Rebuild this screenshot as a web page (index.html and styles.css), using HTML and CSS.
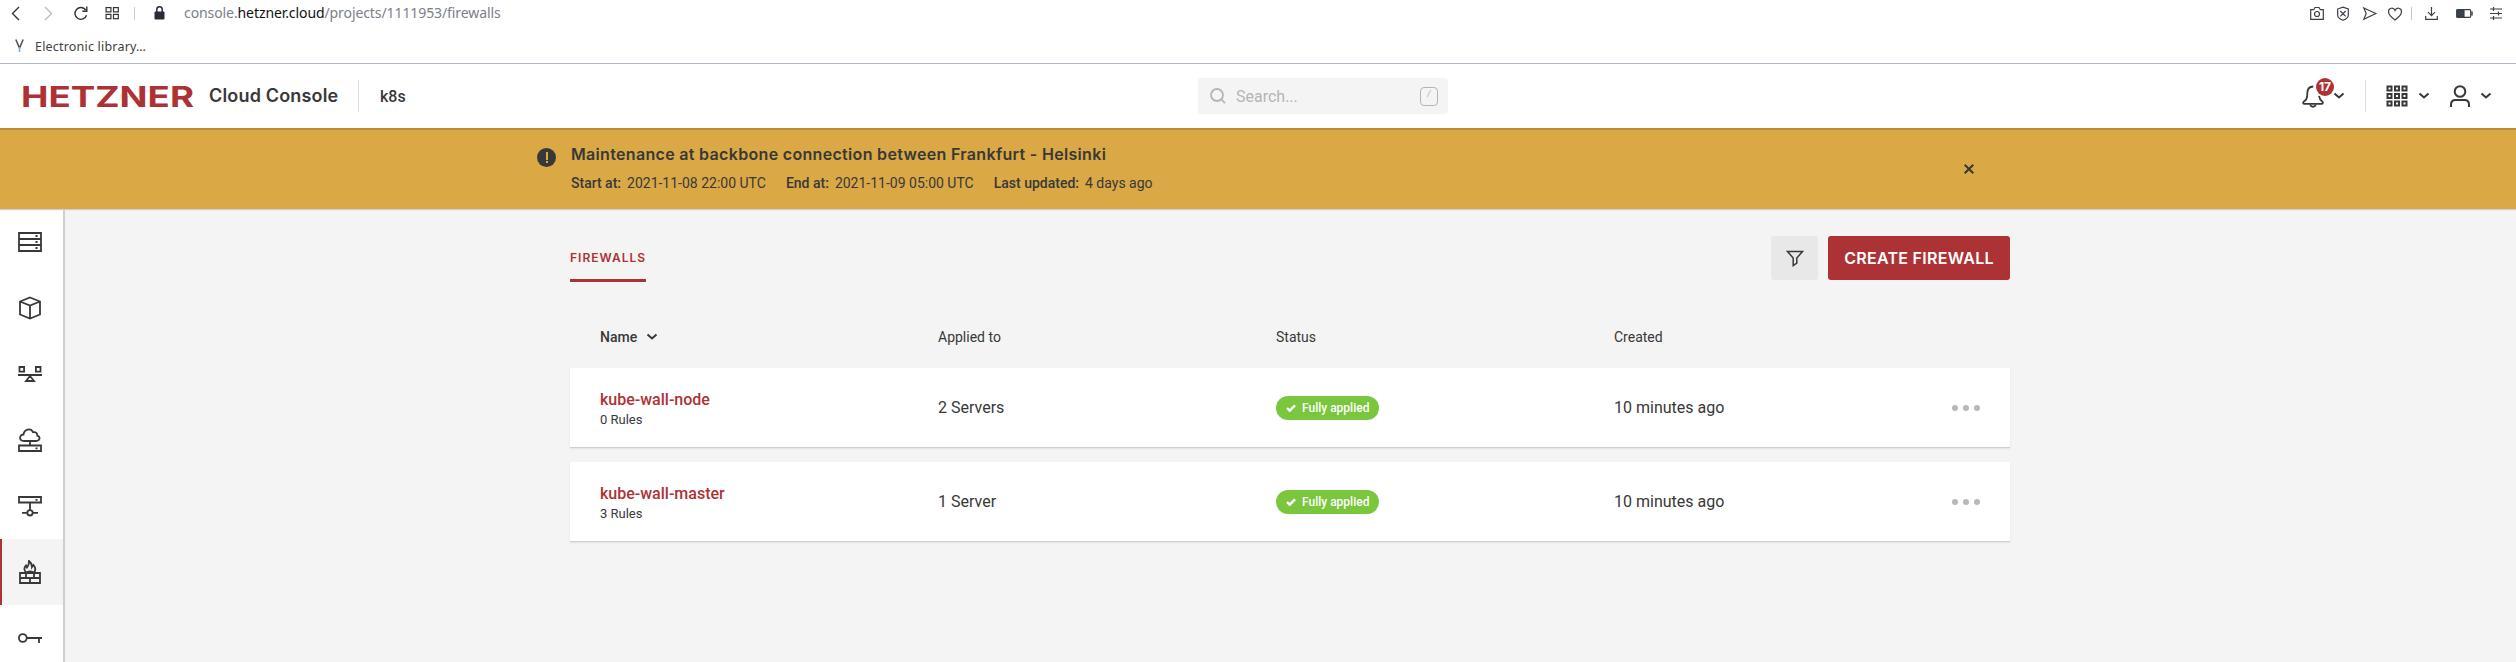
FILE: index.html
```html
<!DOCTYPE html>
<html lang="en">
<head>
<meta charset="utf-8">
<title>Firewalls - Cloud Console</title>
<link rel="stylesheet" href="styles.css">
</head>
<body>
<div class="browser">
  <div class="addressbar">
    <svg class="nav" width="126" height="16" viewBox="0 0 126 16" fill="none" stroke="#303236" stroke-width="1.4">
      <path d="M8 2 1.500 8.500 8 15"/><path d="M34 2 40.500 8.500 34 15" stroke="#b9bbbf"/>
      <path d="M74.700 5A5.900 5.900 0 1 0 75.500 10.200M75.800 1.500v4.700h-4.500"/>
      <g stroke-width="1.200"><rect x="95.100" y="2.600" width="4.800" height="4.300"/><rect x="102.500" y="2.600" width="4.800" height="4.300"/><rect x="95.100" y="9.400" width="4.800" height="4.300"/><rect x="102.500" y="9.400" width="4.800" height="4.300"/></g>
      <path d="M123.500 2v13" stroke="#c9cbd0" stroke-width="1"/>
    </svg>
    <svg class="lock" width="11" height="14" viewBox="0 0 11 14"><rect x=".5" y="5.500" width="10" height="8" rx="1" fill="#272c36"/><path d="M2.800 6V3.500a2.700 2.700 0 0 1 5.400 0V6" fill="none" stroke="#272c36" stroke-width="1.500"/></svg>
    <div class="url">console.<b>hetzner.cloud</b>/projects/1111953/firewalls</div>
    <svg class="tools" width="194" height="16" viewBox="0 0 194 16" fill="none" stroke="#3b3f47" stroke-width="1.200">
      <path d="M.7 4.700h3l1.300-2.200h4l1.300 2.200h3v9.600H.7z"/><circle cx="7" cy="9" r="2.500"/>
      <path d="M27.700 4 33 2.200 38.300 4v6.300c0 2.500-2.600 4-5.300 5-2.700-1-5.300-2.500-5.300-5zM30.300 6l5.400 5.400m0-5.400-5.400 5.400"/>
      <path d="m53.800 3 12 5.500-12 5.700 2.400-5.700z"/>
      <path d="M85 15c-4.500-3.300-6.500-5.200-6.500-8.200 0-4 5-5 6.500-1.300 1.500-3.700 6.500-2.700 6.500 1.300 0 3-2 4.900-6.500 8.200z"/>
      <path d="M101.500 2v13" stroke="#c4c6ca" stroke-width="1"/>
      <path d="M121.500 2v8.700m-3.500-3.500 3.500 3.500 3.500-3.500M115.700 11v3.400h11.600V11"/>
      <rect x="146.700" y="4.700" width="14" height="7.600" rx="1"/><path d="M147 5h7v7h-7z" fill="#3b3f47"/><path d="M162 6.500v4" stroke-width="1.500"/>
      <path d="M180 4h12m-12 4.500h12m-12 4.500h12M183.500 2v4m5 .5v4m-5 .5v4"/>
    </svg>
  </div>
  <div class="bookmarks">
    <svg width="9" height="14" viewBox="0 0 9 14" fill="none" stroke="#4b4e52" stroke-width="1.500"><path d="M.8.500 4.500 9 8.200.5"/><path d="M4.500 8v5" stroke="#79a9c9"/></svg>
    <span>Electronic library…</span>
  </div>
</div>
<header class="header">
  <svg class="logo" width="172" height="24" viewBox="0 0 172 24"><text x="-1" y="22.500" textLength="173" lengthAdjust="spacingAndGlyphs">HETZNER</text></svg>
  <span class="product">Cloud Console</span>
  <span class="sep"></span>
  <span class="project">k8s</span>
  <div class="search">
    <svg width="16" height="16" viewBox="0 0 16 16" fill="none" stroke="#b5b5b5" stroke-width="1.800"><circle cx="7" cy="7" r="6"/><path d="m11.500 11.500 3.500 3.700"/></svg>
    <span class="placeholder">Search...</span><span class="key">/</span>
  </div>
  <div class="account">
    <div class="bell">
      <svg width="22" height="24" viewBox="0 0 22 24" fill="none" stroke="#383838" stroke-width="1.800"><path d="M11.300 2.500C7 2.600 5.300 6 5.300 9.500c0 5-1 6.300-3.700 8.300-.8.800-.6 2 .5 2h17.800c1.100 0 1.300-1.200.5-2-2-1.700-3-3.500-3.400-6"/><path d="M8.300 20.500c.3 3 5 3 5.400 0"/></svg>
      <span class="badge">17</span>
    </div>
    <svg class="chev c1" width="12" height="8" viewBox="0 0 12 8"><path d="m1.500 1.500 4.500 4 4.500-4"/></svg>
    <span class="sep"></span>
    <svg class="apps" width="22" height="22" viewBox="0 0 22 22" fill="none" stroke="#383838" stroke-width="2"><path d="M1.500 1.500h4v4h-4zm7.500 0h4v4H9zm7.500 0h4v4h-4zM1.500 9h4v4h-4zM9 9h4v4H9zm7.500 0h4v4h-4zM1.500 16.500h4v4h-4zm7.500 0h4v4H9zm7.500 0h4v4h-4z"/></svg>
    <svg class="chev c2" width="12" height="8" viewBox="0 0 12 8"><path d="m1.500 1.500 4.500 4 4.500-4"/></svg>
    <svg class="user" width="20" height="22" viewBox="0 0 20 22" fill="none" stroke="#383838" stroke-width="2"><circle cx="10" cy="6.500" r="5.300"/><path d="M1 22v-2.500c0-3 2-4.500 4.500-4.500h9c2.500 0 4.500 1.500 4.500 4.500V22"/></svg>
    <svg class="chev c3" width="12" height="8" viewBox="0 0 12 8"><path d="m1.500 1.500 4.500 4 4.500-4"/></svg>
  </div>
</header>
<section class="notice">
  <span class="alert"><i></i></span>
  <div class="message">
    <h2>Maintenance at backbone connection between Frankfurt - Helsinki</h2>
    <p><span><b>Start at:</b>2021-11-08 22:00 UTC</span><span><b>End at:</b>2021-11-09 05:00 UTC</span><span><b>Last updated:</b>4 days ago</span></p>
  </div>
  <svg class="close" width="10" height="10" viewBox="0 0 10 10"><path d="m.7.700 8.600 8.600m0-8.600L.7 9.300" stroke="#383838" stroke-width="2"/></svg>
</section>
<div class="body">
  <nav class="sidebar">
    <a><svg viewBox="0 0 24 24"><path d="M1 3h22v18H1zM1 9h22M1 15h22" /><path d="M17.500 6h2m-2 6h2m-2 6h2"/></svg></a>
    <a><svg viewBox="0 0 24 24"><path d="m12 1.500 10 4v13l-10 4-10-4v-13zM2 5.500l10 4 10-4M12 9.500v13"/></svg></a>
    <a><svg viewBox="0 0 24 24"><path d="M1.500 5h4.600v4.600H1.500zM17.900 5h4.600v4.600h-4.600zM0 13h24M12 14l4 5H8z"/></svg></a>
    <a><svg viewBox="0 0 24 24"><path d="M1 17.500h22V23H1zM12 14v4M17.500 20.300h2M6 13c-5.200 0-5-6.500-.5-6.500C6 1 13-.5 15 4.200c3-.6 4.500 1.300 4.300 3.500 4 1.300 2 5.300-1 5.300z"/></svg></a>
    <a><svg viewBox="0 0 24 24"><path d="M1 3h22v5.500H1zM17.500 5.800h2M12 9v7M4 18.800h5m6 0h5"/><circle cx="12" cy="18.800" r="2.700"/></svg></a>
    <a class="active"><svg viewBox="0 0 24 24"><path d="M2 13h20v10H2zM2 18h20M8 13v5m8-5v5m-4 0v5M8.500 13C5.500 10 6 7.500 8 5.500l1 2c1-1 2-3 2-6.500 2.500 2 3 4 3 6l1.500-2c2.500 3 2 6 0 8-1-2-6-2-7 0z"/></svg></a>
    <a><svg viewBox="0 0 24 24"><circle cx="4.800" cy="12" r="3.900"/><path d="M9 12h15M21 12v5"/></svg></a>
  </nav>
  <main class="content">
    <div class="toolbar">
      <span class="tab">FIREWALLS</span>
      <button class="filter"><svg width="18" height="17" viewBox="0 0 18 17" fill="none" stroke="#383838" stroke-width="1.500"><path d="M1.500 1.500h15L10.800 8v5L7.200 15.500V8z"/></svg></button>
      <button class="create">CREATE FIREWALL</button>
    </div>
    <div class="row heading">
      <span class="sorted">Name<svg class="chev" width="12" height="8" viewBox="0 0 12 8"><path d="m1.500 1.500 4.500 4 4.500-4"/></svg></span><span>Applied to</span><span>Status</span><span>Created</span>
    </div>
    <div class="row card">
      <div><a class="name">kube-wall-node</a><small>0 Rules</small></div>
      <span>2 Servers</span>
      <div><span class="pill"><svg width="10" height="8" viewBox="0 0 10 8"><path d="m1 4 2.700 2.700L9 1.300"/></svg>Fully applied</span></div>
      <span>10 minutes ago</span>
      <span class="dots"><i></i><i></i><i></i></span>
    </div>
    <div class="row card">
      <div><a class="name">kube-wall-master</a><small>3 Rules</small></div>
      <span>1 Server</span>
      <div><span class="pill"><svg width="10" height="8" viewBox="0 0 10 8"><path d="m1 4 2.700 2.700L9 1.300"/></svg>Fully applied</span></div>
      <span>10 minutes ago</span>
      <span class="dots"><i></i><i></i><i></i></span>
    </div>
  </main>
</div>
</body>
</html>
```
FILE: styles.css
```css
* { box-sizing: border-box; }
body { margin: 0; height: 662px; overflow: hidden; display: flex; flex-direction: column; background: #f4f4f4; color: #383838; font-family: Roboto, sans-serif; font-size: 16px; }
svg { display: block; flex: none; }
.browser { height: 64px; flex: none; background: #fff; border-bottom: 1px solid #b4bbc6; }
.addressbar { display: flex; align-items: center; height: 26px; padding-left: 11px; }
.addressbar svg { margin-top: -1px; }
.lock { margin-left: 17px; }
.url { margin-left: 19px; margin-top: -1px; font-family: "Noto Sans", sans-serif; font-size: 14px; color: #7b808b; white-space: nowrap; letter-spacing: -.09px; }
.url b { color: #111; font-weight: 400; }
.tools { margin-left: auto; margin-right: 12px; }
.bookmarks { display: flex; align-items: center; gap: 11px; height: 38px; padding: 3px 0 0 15px; font-family: "Noto Sans", sans-serif; font-size: 12.5px; letter-spacing: .2px; color: #404040; }
.bookmarks svg { margin-top: -2px; }
.header { display: flex; align-items: center; height: 64px; flex: none; padding-left: 22px; background: #fff; }
.logo { overflow: visible; }
.logo text { font: 700 29px Inter, sans-serif; fill: #ad3235; }
.product { margin-left: 15px; width: 149px; font: 600 18px Inter, sans-serif; letter-spacing: .17px; white-space: nowrap; margin-top: -1px; }
.sep { width: 1px; height: 32px; flex: none; background: #dedede; }
.project { width: 839px; padding-left: 21px; font-weight: 500; }
.search { display: flex; align-items: center; width: 250px; height: 36px; padding: 0 10px 0 12px; border-radius: 3px; background: #f4f4f4; color: #b5b5b5; }
.placeholder { margin-left: 10px; }
.key { margin-left: auto; display: grid; place-items: center; width: 18px; height: 19px; border: 1px solid #b5b5b5; border-radius: 4px; font: 9px "Liberation Mono", monospace; padding-bottom: 3px; }
.account { display: flex; align-items: center; margin-left: auto; padding-right: 24px; }
.bell { position: relative; width: 22px; }
.badge { position: absolute; left: 14px; top: -6px; width: 18px; height: 18px; border-radius: 50%; background: #ad3235; color: #fff; font: 700 12px/18px Inter, sans-serif; text-align: center; }
.chev { fill: none; stroke: #383838; stroke-width: 2; }
.c1 { margin: 0 20px 0 9px; }
.apps { margin-left: 20px; }
.c2 { margin: 0 20px 0 10px; }
.c3 { margin-left: 10px; }
.notice { display: flex; height: 81px; flex: none; padding-left: 537px; background: #daa845; border-top: 2px solid #b98d37; box-shadow: 0 1px 1px #cfcfcf; z-index: 1; }
.alert { display: grid; place-items: center; width: 19px; height: 19px; margin-top: 18px; border-radius: 50%; background: #383838; }
.alert i { width: 2px; height: 11px; background: linear-gradient(#daa845 70%, transparent 70% 82%, #daa845 82%); }
.message { width: 1391px; padding: 14px 0 0 15px; }
.message h2 { margin: 0; font: 600 16px/20px Inter, sans-serif; letter-spacing: .32px; }
.message p { display: flex; gap: 20px; margin: 11px 0 0; font-size: 14px; line-height: 16px; }
.message b { font-weight: 500; margin-right: 6px; }
.close { margin: 34px 0 0 17px; }
.body { display: flex; flex: 1; min-height: 0; }
.sidebar { width: 65px; flex: none; background: #fff; border-right: 2px solid #cfcfcf; }
.sidebar a { display: flex; align-items: center; height: 66px; padding-left: 18px; }
.sidebar a.active { background: #f4f4f4; border-left: 2px solid #ad3235; padding-left: 16px; }
.sidebar svg { width: 24px; height: 24px; fill: none; stroke: #383838; stroke-width: 1.8; }
.content { width: 1440px; margin-left: 505px; padding-top: 27px; }
.toolbar { display: flex; align-items: flex-start; height: 46px; }
.tab { height: 46px; padding-top: 13px; margin-right: auto; border-bottom: 3px solid #ad3235; color: #ad3235; font: 600 12px/17px Inter, sans-serif; letter-spacing: 1px; }
button { border: 0; border-radius: 3px; height: 44px; padding: 0; display: grid; place-items: center; }
.filter { width: 47px; background: #e8e8e8; }
.create { width: 182px; margin-left: 10px; background: #ad3235; color: #fff; font: 600 16px Inter, sans-serif; letter-spacing: .28px; }
.row { display: grid; grid-template-columns: repeat(4, 338px) 1fr; align-items: center; padding: 0 30px; }
.heading { height: 86px; align-items: start; font-size: 14px; line-height: 16px; padding-top: 47px; }
.sorted { display: flex; align-items: center; gap: 9px; font-weight: 500; }
.card { height: 80px; margin-bottom: 14px; background: #fff; border-bottom: 1px solid #cecece; box-shadow: 0 1px 2px rgba(0, 0, 0, .08); }
.card > div { display: flex; flex-direction: column; align-items: flex-start; }
.name { color: #ad3235; font-weight: 500; line-height: 20px; margin-top: 3px; }
small { font-size: 13px; line-height: 17px; margin-top: 1px; }
.pill { display: flex; align-items: center; width: 103px; height: 24px; padding-left: 10px; gap: 6px; border-radius: 12px; background: #7ac63d; color: #fff; font-size: 12px; font-weight: 500; white-space: nowrap; }
.pill path { fill: none; stroke: #fff; stroke-width: 2.4; }
.dots { display: flex; gap: 5px; }
.dots i { width: 6px; height: 6px; border-radius: 50%; background: #b8b8b8; }
```
